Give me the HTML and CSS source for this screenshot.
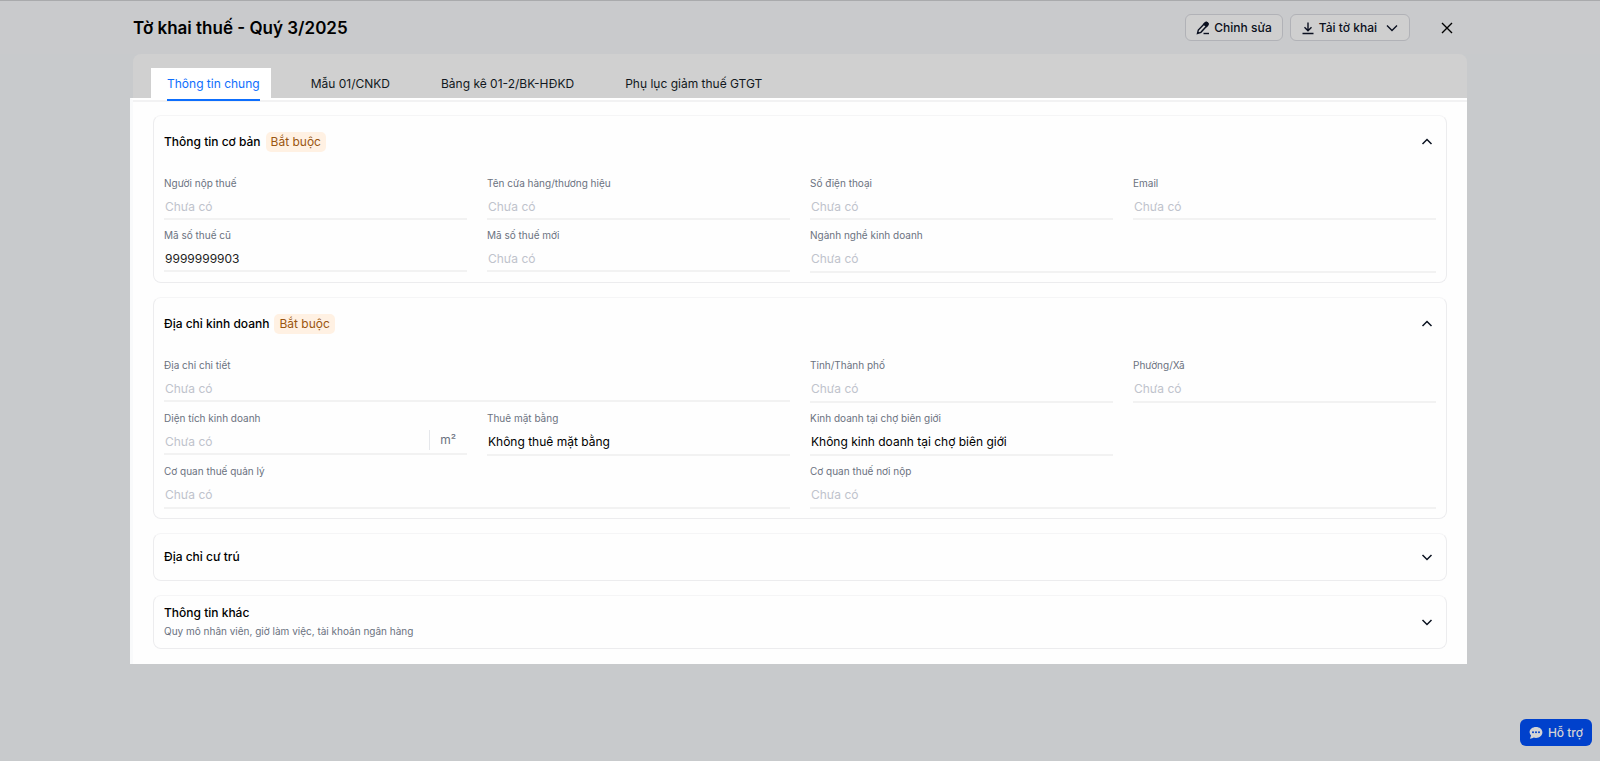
FILE: index.html
```html
<!DOCTYPE html>
<html lang="vi">
<head>
    <meta charset="UTF-8">
    <meta name="viewport" content="width=device-width, initial-scale=1.0">
    <title>Tờ khai thuế - Quý 3/2025</title>
    <link rel="stylesheet" href="styles.css">
</head>
<body>
    <header class="topbar">
        <div class="topbar-inner">
            <h1>Tờ khai thuế - Quý 3/2025</h1>
            <div class="actions">
                <button type="button" class="btn">
                    <svg class="icon" viewBox="0 0 14 14"><path d="M1.500 12.500l.8-3.500 6.800-7a1.600 1.600 0 0 1 2.500 2L4.900 11.300z"/><path d="M7.800 3.200l2.800 2.300 1.300-1.600c.8-1.400-1.300-3.200-2.600-2.100z" fill="currentColor"/><path d="M7.500 12.500H13"/></svg>
                    Chỉnh sửa
                </button>
                <button type="button" class="btn">
                    <svg class="icon" viewBox="0 0 14 14"><path d="M7 1.500v8M3.500 6.200L7 9.700l3.500-3.500M1.500 12.500h11"/></svg>
                    Tải tờ khai
                    <svg class="icon caret" viewBox="0 0 14 14"><path d="M2 4.500l5 5 5-5"/></svg>
                </button>
                <button type="button" class="close" aria-label="Đóng">
                    <svg class="icon" viewBox="0 0 14 14"><path d="M2 2l10 10M12 2L2 12"/></svg>
                </button>
            </div>
        </div>
    </header>

    <main class="container">
        <div class="tabs" role="tablist">
            <button type="button" class="tab active" role="tab" aria-selected="true"><span>Thông tin chung</span></button>
            <button type="button" class="tab" role="tab"><span>Mẫu 01/CNKD</span></button>
            <button type="button" class="tab" role="tab"><span>Bảng kê 01-2/BK-HĐKD</span></button>
            <button type="button" class="tab" role="tab"><span>Phụ lục giảm thuế GTGT</span></button>
        </div>

        <div class="panel">
            <section class="card">
                <button type="button" class="card-header" aria-expanded="true">
                    <span class="card-title">Thông tin cơ bản</span>
                    <span class="badge">Bắt buộc</span>
                    <svg class="chevron" viewBox="0 0 12 12"><path d="M1.500 8L6 3.500 10.500 8"/></svg>
                </button>
                <div class="fields">
                    <div class="field">
                        <label for="taxpayer">Người nộp thuế</label>
                        <input type="text" id="taxpayer" placeholder="Chưa có">
                    </div>
                    <div class="field">
                        <label for="store">Tên cửa hàng/thương hiệu</label>
                        <input type="text" id="store" placeholder="Chưa có">
                    </div>
                    <div class="field">
                        <label for="phone">Số điện thoại</label>
                        <input type="tel" id="phone" placeholder="Chưa có">
                    </div>
                    <div class="field">
                        <label for="email">Email</label>
                        <input type="email" id="email" placeholder="Chưa có">
                    </div>
                    <div class="field">
                        <label for="old-code">Mã số thuế cũ</label>
                        <input type="text" id="old-code" placeholder="Chưa có" value="9999999903">
                    </div>
                    <div class="field">
                        <label for="new-code">Mã số thuế mới</label>
                        <input type="text" id="new-code" placeholder="Chưa có">
                    </div>
                    <div class="field wide">
                        <label for="industry">Ngành nghề kinh doanh</label>
                        <select id="industry" class="empty"><option>Chưa có</option></select>
                    </div>
                </div>
            </section>

            <section class="card">
                <button type="button" class="card-header" aria-expanded="true">
                    <span class="card-title">Địa chỉ kinh doanh</span>
                    <span class="badge">Bắt buộc</span>
                    <svg class="chevron" viewBox="0 0 12 12"><path d="M1.500 8L6 3.500 10.500 8"/></svg>
                </button>
                <div class="fields">
                    <div class="field wide">
                        <label for="address">Địa chỉ chi tiết</label>
                        <input type="text" id="address" placeholder="Chưa có">
                    </div>
                    <div class="field">
                        <label for="province">Tỉnh/Thành phố</label>
                        <select id="province" class="empty"><option>Chưa có</option></select>
                    </div>
                    <div class="field">
                        <label for="ward">Phường/Xã</label>
                        <select id="ward" class="empty"><option>Chưa có</option></select>
                    </div>
                    <div class="field">
                        <label for="area">Diện tích kinh doanh</label>
                        <div class="input-group">
                            <input type="text" id="area" placeholder="Chưa có">
                            <span class="unit">m²</span>
                        </div>
                    </div>
                    <div class="field">
                        <label for="rent">Thuê mặt bằng</label>
                        <select id="rent"><option>Không thuê mặt bằng</option></select>
                    </div>
                    <div class="field">
                        <label for="border-market">Kinh doanh tại chợ biên giới</label>
                        <select id="border-market"><option>Không kinh doanh tại chợ biên giới</option></select>
                    </div>
                    <div class="field wide row-start">
                        <label for="tax-office">Cơ quan thuế quản lý</label>
                        <select id="tax-office" class="empty"><option>Chưa có</option></select>
                    </div>
                    <div class="field wide">
                        <label for="pay-office">Cơ quan thuế nơi nộp</label>
                        <select id="pay-office" class="empty"><option>Chưa có</option></select>
                    </div>
                </div>
            </section>

            <section class="card">
                <button type="button" class="card-header collapsed" aria-expanded="false">
                    <span class="card-title">Địa chỉ cư trú</span>
                    <svg class="chevron" viewBox="0 0 12 12"><path d="M1.500 4L6 8.500 10.500 4"/></svg>
                </button>
            </section>

            <section class="card">
                <button type="button" class="card-header with-desc" aria-expanded="false">
                    <span class="card-text">
                        <span class="card-title">Thông tin khác</span>
                        <span class="card-desc">Quy mô nhân viên, giờ làm việc, tài khoản ngân hàng</span>
                    </span>
                    <svg class="chevron" viewBox="0 0 12 12"><path d="M1.500 4L6 8.500 10.500 4"/></svg>
                </button>
            </section>
        </div>
    </main>

    <button type="button" class="support">
        <svg class="support-icon" viewBox="0 0 14 14"><path d="M7 1C3.400 1 .6 3.200.6 6.100c0 1.300.6 2.500 1.500 3.400L.9 12.800c1.600 0 2.900-.5 3.800-1.200.7.2 1.500.3 2.300.3 3.600 0 6.400-2.500 6.400-5.600S10.600 1 7 1z" fill="#d4d4d4"/><circle cx="4" cy="6.300" r="1" fill="#0041cc"/><circle cx="7" cy="6.300" r="1" fill="#0041cc"/><circle cx="10" cy="6.300" r="1" fill="#0041cc"/></svg>
        Hỗ trợ
    </button>
</body>
</html>
```
FILE: styles.css
```css
* {
    box-sizing: border-box;
}
body {
    font-family: Inter, 'Liberation Sans', sans-serif;
    font-size: 12px;
    margin: 0;
    background: #c8cacc;
    color: #000;
}
button, input, select {
    font: inherit;
    color: inherit;
    margin: 0;
}
button {
    cursor: pointer;
}

/* Top bar */
.topbar {
    border-top: 1px solid #a9aaac;
    background: #c9cacc;
}
.topbar-inner {
    display: flex;
    align-items: center;
    justify-content: space-between;
    max-width: 1334px;
    height: 53px;
    margin: 0 auto;
}
h1 {
    margin: 0;
    font-size: 17px;
    font-weight: 600;
}
.actions {
    display: flex;
    align-items: center;
    gap: 7px;
}
.btn {
    display: flex;
    align-items: center;
    gap: 4px;
    height: 27px;
    padding: 0 10px;
    border: 1px solid #b1b2b7;
    border-radius: 6px;
    background: #cfcfcf;
    color: #0b1020;
    font-weight: 500;
}
.icon {
    width: 14px;
    height: 14px;
    fill: none;
    stroke: currentColor;
    stroke-width: 1.4;
}
.caret {
    margin-left: 4px;
}
.close {
    display: flex;
    margin: 0 9px 0 19px;
    padding: 4px;
    border: 0;
    background: none;
}

/* Tabs */
.container {
    max-width: 1334px;
    margin: 0 auto;
}
.tabs {
    display: flex;
    align-items: flex-end;
    gap: 24px;
    height: 44px;
    padding-left: 18px;
    background: #d0d0d0;
    border-radius: 8px 8px 0 0;
}
.tab {
    height: 30px;
    padding: 0 11px 0 16px;
    border: 0;
    background: none;
    color: #111820;
}
.tab span {
    display: block;
    padding-top: 2px;
    line-height: 28px;
}
.tab.active {
    position: relative;
    background: #fff;
    color: #0d6efd;
}
.tab.active::after {
    content: "";
    position: absolute;
    left: 16px;
    right: 11px;
    bottom: -3px;
    height: 2px;
    background: #0d6efd;
}

/* Panel and cards */
.panel {
    display: flex;
    flex-direction: column;
    gap: 14px;
    margin-left: -3px;
    padding: 15px 20px 15px;
    border-top: 2px solid #fff;
    border-left: 3px solid #f9fafb;
    background: #fefefe;
    box-shadow: inset 0 2px #f2f2f3;
}
.card {
    border: 1px solid #ececee;
    border-top-color: #f5f5f6;
    border-radius: 8px;
}
.card-header {
    display: flex;
    align-items: center;
    gap: 5px;
    width: 100%;
    height: 51px;
    padding: 0 13px 0 10px;
    border: 0;
    background: none;
    text-align: left;
}
.card-header.collapsed {
    height: 46px;
}
.card-header.with-desc {
    height: 52px;
}
.card-title {
    font-weight: 500;
    line-height: 18px;
}
.card-text {
    display: flex;
    flex-direction: column;
}
.card-desc {
    color: #6b7280;
    font-size: 10px;
    line-height: 18px;
}
.badge {
    padding: 0 5px;
    border-radius: 5px;
    background: #fff1e3;
    color: #9a5510;
    line-height: 20px;
}
.chevron {
    width: 12px;
    height: 12px;
    margin-left: auto;
    fill: none;
    stroke: #0b1220;
    stroke-width: 1.5;
}

/* Form fields */
.fields {
    display: grid;
    grid-template-columns: repeat(4, 1fr);
    gap: 7px 20px;
    align-items: start;
    padding: 8px 10px 9px;
}
.field {
    display: flex;
    flex-direction: column;
    min-width: 0;
}
.wide {
    grid-column-end: span 2;
}
.row-start {
    grid-column-start: 1;
}
label {
    color: #6b7280;
    font-size: 10px;
    line-height: 16px;
}
input, select {
    width: 100%;
    height: 29px;
    padding: 4px 1px 0;
    border: 0;
    border-bottom: 2px solid #f2f2f2;
    border-radius: 0;
    background: none;
    outline: none;
    appearance: none;
}
input {
    color: #222;
}
select {
    height: 30px;
    padding-top: 2px;
}
input::placeholder, .empty {
    color: #bfc3cc;
    opacity: 1;
}
.input-group {
    display: flex;
    align-items: center;
    border-bottom: 2px solid #f2f2f2;
}
.input-group input {
    height: 27px;
    border-bottom: 0;
}
.unit {
    padding: 0 11px 0 10px;
    border-left: 1px solid #e5e7eb;
    color: #6b7280;
    line-height: 20px;
}

/* Support chat */
.support {
    position: fixed;
    right: 8px;
    bottom: 15px;
    display: flex;
    align-items: center;
    gap: 5px;
    height: 27px;
    padding: 0 9px;
    border: 0;
    border-radius: 6px;
    background: #0041cc;
    color: #d4d4d4;
    font-weight: 500;
}
.support-icon {
    width: 14px;
    height: 14px;
}
```
